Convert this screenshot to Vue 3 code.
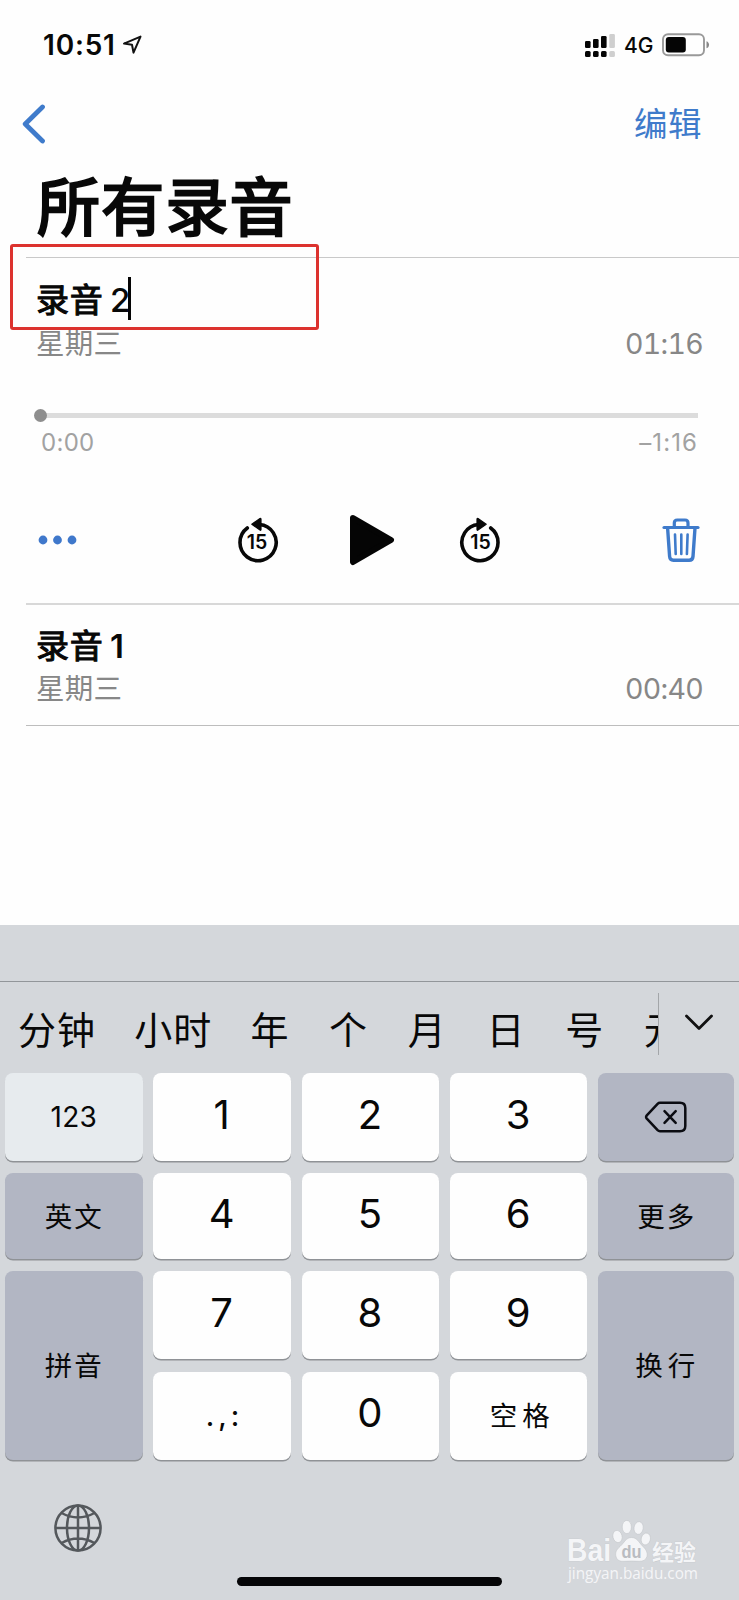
<script setup>
const candidates = ['分钟', '小时', '年', '个', '月', '日', '号', '元']
const signal = [
  { x: 0, top: 7, on: true },
  { x: 8, top: 5, on: true },
  { x: 16, top: 2, on: true },
  { x: 24.3, top: 0, on: false },
]
const keys = [
  { t: '123', c: 'light small' },
  { t: '1', c: 'num' },
  { t: '2', c: 'num' },
  { t: '3', c: 'num' },
  { t: 'del', c: 'dark' },
  { t: '英文', c: 'dark cjk' },
  { t: '4', c: 'num' },
  { t: '5', c: 'num' },
  { t: '6', c: 'num' },
  { t: '更多', c: 'dark cjk' },
  { t: '拼音', c: 'dark cjk tall' },
  { t: '7', c: 'num' },
  { t: '8', c: 'num' },
  { t: '9', c: 'num' },
  { t: '换行', c: 'dark cjk wide tall' },
  { t: '.,:', c: 'punct' },
  { t: '0', c: 'num' },
  { t: '空格', c: 'cjk wide' },
]
</script>

<template>
  <div class="phone">
    <header class="status">
      <span class="clock">10:51</span>
      <svg class="loc" width="20" height="20" viewBox="0 0 20 20">
        <path d="M2 8.6 18.500 1.6 11.500 17.6 10 9.8Z" fill="none" stroke="#111" stroke-width="2" stroke-linejoin="round" />
      </svg>
      <svg class="signal" width="30" height="23" viewBox="0 0 30 23">
        <g v-for="s in signal" :key="s.x" :fill="s.on ? '#050505' : '#cfcfcf'">
          <rect :x="s.x" :y="s.top" width="5.6" :height="14 - s.top" rx="1.3" />
          <rect :x="s.x" y="17" width="5.6" height="6" rx="1.5" />
        </g>
      </svg>
      <span class="net">4G</span>
      <svg class="battery" width="48" height="24" viewBox="0 0 48 24">
        <rect x="1" y="1.2" width="41" height="21" rx="5" fill="none" stroke="#999" stroke-width="1.9" />
        <rect x="3.8" y="4" width="20" height="15.4" rx="3" fill="#050505" />
        <path d="M44.5 8.3c3.4 1 3.4 6 0 7Z" fill="#888" />
      </svg>
    </header>

    <nav class="nav">
      <svg width="24" height="40" viewBox="0 0 24 40">
        <path d="M20.5 3 3.2 20 20.5 37" fill="none" stroke="#3f7bcb" stroke-width="4.8" stroke-linecap="round" stroke-linejoin="round" />
      </svg>
      <span class="edit">编辑</span>
    </nav>

    <h1 class="title">所有录音</h1>

    <section class="item open">
      <div class="name"><span class="han">录音</span><span class="no">2</span><i class="caret"></i></div>
      <div class="meta"><span class="day">星期三</span><span class="dur">01:16</span></div>
      <div class="track"><i class="thumb"></i></div>
      <div class="times"><span class="gone">0:00</span><span class="left">–1:16</span></div>
      <div class="controls">
        <svg width="40" height="12" viewBox="0 0 40 12" fill="#3f78cb">
          <circle cx="5" cy="6" r="4.4" /><circle cx="19.5" cy="6" r="4.4" /><circle cx="34" cy="6" r="4.4" />
        </svg>
        <svg class="back15" width="44" height="48" viewBox="0 0 44 48">
          <path d="M12.3 12A18.1 18.1 0 1 0 24.5 8.5" fill="none" stroke="#080808" stroke-width="3.6" stroke-linecap="round" />
          <path d="M16.8 8.2 25 2.6Q26 2 26 3.2L26 13.6Q26 14.8 25 14Z" fill="#080808" stroke="#080808" stroke-width="1.2" stroke-linejoin="round" />
          <text class="fifteen" x="22" y="33.4" text-anchor="middle">15</text>
        </svg>
        <svg class="play" width="46" height="52" viewBox="0 0 46 52">
          <path d="M4 4 42 26 4 48Z" fill="#050505" stroke="#050505" stroke-width="6" stroke-linejoin="round" />
        </svg>
        <svg class="fwd15" width="44" height="48" viewBox="0 0 44 48">
          <path d="M31.7 12A18.1 18.1 0 1 1 19.5 8.5" fill="none" stroke="#080808" stroke-width="3.6" stroke-linecap="round" />
          <path d="M27.2 8.2 19 2.6Q18 2 18 3.2L18 13.6Q18 14.8 19 14Z" fill="#080808" stroke="#080808" stroke-width="1.2" stroke-linejoin="round" />
          <text class="fifteen" x="21.4" y="33.4" text-anchor="middle">15</text>
        </svg>
        <svg class="trash" width="38" height="46" viewBox="0 0 38 46" fill="none" stroke="#3f7bcb" stroke-linecap="round" stroke-linejoin="round">
          <path d="M2 10.5H36" stroke-width="3.2" />
          <path d="M12.3 10V6Q12.3 3 15.3 3H23Q26 3 26 6V10" stroke-width="3.2" />
          <path d="M5.6 11 7.6 39.5Q7.9 43.2 11.4 43.2H27.2Q30.7 43.2 31 39.5L33 11" stroke-width="3.4" />
          <path d="M13 17.5 13.7 37M19.3 17.5V37M25.6 17.5 24.9 37" stroke-width="2.6" />
        </svg>
      </div>
    </section>

    <section class="item closed">
      <div class="name"><span class="han">录音</span><span class="no bold">1</span></div>
      <div class="meta"><span class="day">星期三</span><span class="dur">00:40</span></div>
    </section>

    <section class="keyboard">
      <div class="strip"></div>
      <div class="cands">
        <div class="scroll">
          <span v-for="c in candidates" :key="c" :class="['cand', { two: c.length === 2 }]">{{ c }}</span>
        </div>
        <svg class="more" width="30" height="20" viewBox="0 0 30 20">
          <path d="M2.5 3 15 15.5 27.5 3" fill="none" stroke="#111" stroke-width="2.8" stroke-linecap="round" stroke-linejoin="round" />
        </svg>
      </div>
      <div class="keys">
        <div v-for="k in keys" :key="k.t" :class="['key', k.c]">
          <svg v-if="k.t === 'del'" width="44" height="32" viewBox="0 0 44 32" fill="none" stroke="#0b0c12" stroke-width="2.5" stroke-linecap="round" stroke-linejoin="round">
            <path d="M16 1.8H36Q41.3 1.8 41.3 7V25Q41.3 30.2 36 30.2H16Q14.6 30.2 13.6 29.2L2.8 17.6Q1.4 16 2.8 14.4L13.6 2.8Q14.6 1.8 16 1.8Z" />
            <path d="M20.5 10.2 31.7 21.8M31.7 10.2 20.5 21.8" />
          </svg>
          <span v-else>{{ k.t }}</span>
        </div>
      </div>
      <div class="bottom">
        <svg class="globe" width="48" height="48" viewBox="0 0 48 48" fill="none" stroke="#54585c" stroke-width="2.5">
          <circle cx="24" cy="24" r="22.6" />
          <ellipse cx="24" cy="24" rx="11" ry="22.6" />
          <path d="M24 1.4V46.6M1.4 24H46.6M7.6 9Q24 18 40.4 9M7.6 39Q24 30 40.4 39" />
        </svg>
      </div>
      <div class="home"></div>
    </section>

    <div class="redbox"></div>

    <svg class="mark" width="140" height="70" viewBox="0 0 140 70">
      <g class="ink">
        <text class="bai" x="2" y="42" textLength="44" lengthAdjust="spacingAndGlyphs">Bai</text>
        <ellipse cx="52.5" cy="17.5" rx="4.6" ry="6.2" transform="rotate(-14 52.5 17.5)" />
        <ellipse cx="61.8" cy="8" rx="4.6" ry="6.6" />
        <ellipse cx="73.6" cy="9" rx="4.6" ry="6.4" transform="rotate(8 73.6 9)" />
        <ellipse cx="80.8" cy="20" rx="4.6" ry="6" transform="rotate(14 80.8 20)" />
        <path d="M66.5 18.5C61 18.5 59.5 23.5 55 27.5C51 31 50 34 51 37.5C52 41.5 55 42.5 59 42.3C64 42 69 42 74 42.3C78 42.5 81 41 82 37.5C83 33 80.5 30 77.5 27C73.5 23 72 18.5 66.5 18.5Z" />
        <text class="jy" x="87" y="40.5">经验</text>
      </g>
      <text class="du" x="56.5" y="38.5" textLength="20" lengthAdjust="spacingAndGlyphs">du</text>
      <text class="url" x="3" y="60" textLength="130" lengthAdjust="spacingAndGlyphs">jingyan.baidu.com</text>
    </svg>
  </div>
</template>

<style>
html,
body {
  margin: 0;
  background: #fefefe;
}
</style>

<style scoped>
.phone {
  position: relative;
  display: flex;
  flex-direction: column;
  width: 739px;
  height: 1600px;
  overflow: hidden;
  background: #fefefe;
  color: #080808;
  font-family: Inter, 'Noto Sans CJK SC', sans-serif;
  white-space: pre;
}
.phone * {
  box-sizing: border-box;
}
svg {
  display: block;
  flex: none;
}
.status {
  display: flex;
  align-items: center;
  height: 89px;
  padding: 0 29px 0 43px;
}
.clock {
  width: 79px;
  font-size: 28px;
  line-height: 40px;
  font-weight: 600;
  letter-spacing: 0.8px;
}
.signal {
  margin-left: auto;
  margin-top: 1px;
}
.net {
  width: 30px;
  margin: 2px 8px 0 9px;
  font-size: 21px;
  line-height: 24px;
  font-weight: 500;
}
.nav {
  display: flex;
  align-items: center;
  justify-content: space-between;
  height: 70px;
  padding: 0 37px 0 22px;
}
.edit {
  color: #3f7bcb;
  font-size: 33.5px;
  line-height: 40px;
  letter-spacing: 0.5px;
}
.title {
  height: 98px;
  margin: 0;
  padding-left: 37px;
  font-size: 63px;
  line-height: 97px;
  font-weight: 400;
  letter-spacing: 1.2px;
  -webkit-text-stroke: 2.4px #080808;
}
.item {
  margin-left: 26px;
  padding: 0 36px 0 10px;
  border-top: 1px solid #c9c9c9;
}
.open {
  height: 346px;
  padding-top: 22px;
}
.closed {
  height: 123px;
  padding-top: 21px;
  border-top: 2px solid #d8d8d8;
  border-bottom: 1px solid #bdbdbd;
}
.closed .meta {
  height: 46px;
}
.name {
  display: flex;
  align-items: center;
  height: 40px;
  font-size: 33px;
  line-height: 40px;
}
.han {
  letter-spacing: 0.8px;
  -webkit-text-stroke: 1.1px #080808;
}
.no {
  margin-left: 6.5px;
  font-weight: 500;
}
.bold {
  font-weight: 600;
}
.caret {
  width: 3px;
  height: 43px;
  margin: -4px 0 0 -2px;
  background: #050505;
}
.meta {
  display: flex;
  justify-content: space-between;
  align-items: center;
  height: 48px;
  color: #878787;
  font-size: 28.5px;
  line-height: 40px;
}
.day {
  letter-spacing: 0.3px;
}
.dur {
  letter-spacing: -0.7px;
  font-variant-numeric: tabular-nums;
}
.track {
  position: relative;
  height: 5px;
  margin: 45px 5px 0 4px;
  background: #dcdcdc;
}
.thumb {
  position: absolute;
  left: -6px;
  top: -4px;
  width: 13px;
  height: 13px;
  border-radius: 50%;
  background: #8e8e8e;
}
.times {
  display: flex;
  justify-content: space-between;
  margin-top: 10px;
  padding: 0 5px;
  color: #a2a2a2;
  font-size: 24px;
  line-height: 30px;
}
.gone {
  letter-spacing: 0.3px;
}
.left {
  letter-spacing: 1.1px;
}
.controls {
  display: flex;
  align-items: center;
  height: 60px;
  margin-top: 52px;
  padding-left: 2px;
}
.fifteen {
  font-size: 19.5px;
  font-weight: 600;
  letter-spacing: -0.1px;
  fill: #080808;
}
.back15 {
  margin-left: 157px;
}
.play {
  margin-left: 70px;
}
.fwd15 {
  margin-left: 64px;
}
.trash {
  margin-left: auto;
  margin-right: 3px;
}
.keyboard {
  display: flex;
  flex-direction: column;
  height: 675px;
  margin-top: auto;
  background: #d4d7db;
}
.strip {
  height: 57px;
  border-bottom: 1px solid #92969a;
}
.cands {
  display: flex;
  height: 91px;
  padding-top: 11px;
}
.scroll {
  display: flex;
  width: 659px;
  height: 62px;
  padding-left: 18px;
  overflow: hidden;
  border-right: 1px solid #a3a6a9;
}
.cand {
  flex: none;
  width: 78.7px;
  font-size: 38px;
  line-height: 75px;
  letter-spacing: 1px;
}
.two {
  width: 116.2px;
}
.more {
  margin: 20px 0 0 25px;
}
.keys {
  display: grid;
  grid-template-columns: repeat(4, 137.5px) 136px;
  grid-template-rows: 88px 86px 88px 88px;
  column-gap: 10.8px;
  row-gap: 12.2px;
  padding-left: 5px;
}
.key {
  display: flex;
  align-items: center;
  justify-content: center;
  border-radius: 8px;
  background: #fefefe;
  box-shadow: 0 1.5px 0 #8f9296;
  line-height: 40px;
}
.num {
  padding: 0 1px 5px 0;
  font-size: 40px;
}
.light {
  background: #e7ebee;
}
.dark {
  background: #b2b6c3;
}
.small {
  font-size: 28px;
  letter-spacing: 0.2px;
}
.cjk {
  padding: 1px 0 0 1px;
  font-size: 27.5px;
  letter-spacing: 2px;
}
.wide {
  padding-left: 7px;
  letter-spacing: 5px;
}
.dark.wide {
  padding-left: 3px;
}
.tall {
  grid-row: span 2;
}
.punct {
  padding-left: 5px;
  font-size: 28px;
  font-weight: 500;
  letter-spacing: 4px;
}
.bottom {
  padding: 44px 0 0 54px;
}
.home {
  width: 265px;
  height: 9px;
  margin: 25px 0 0 237px;
  border-radius: 5px;
  background: #050507;
}
.redbox {
  position: absolute;
  left: 10px;
  top: 244px;
  width: 308.5px;
  height: 85.5px;
  border: 3px solid #dc322e;
  border-radius: 3px;
}
.mark {
  position: absolute;
  left: 565px;
  top: 1519px;
}
.ink {
  fill: #f4f5f7;
  stroke: #c3c6ca;
  stroke-width: 0.6;
}
.bai {
  font-family: 'Liberation Sans', sans-serif;
  font-size: 31px;
  font-weight: 700;
  paint-order: stroke;
}
.jy {
  font-size: 22px;
  font-weight: 700;
  paint-order: stroke;
}
.du {
  font-family: 'Liberation Sans', sans-serif;
  font-size: 19px;
  font-weight: 700;
  fill: #b9bcc1;
}
.url {
  font-family: 'Open Sans', sans-serif;
  font-size: 16px;
  fill: #f4f5f7;
}
</style>
